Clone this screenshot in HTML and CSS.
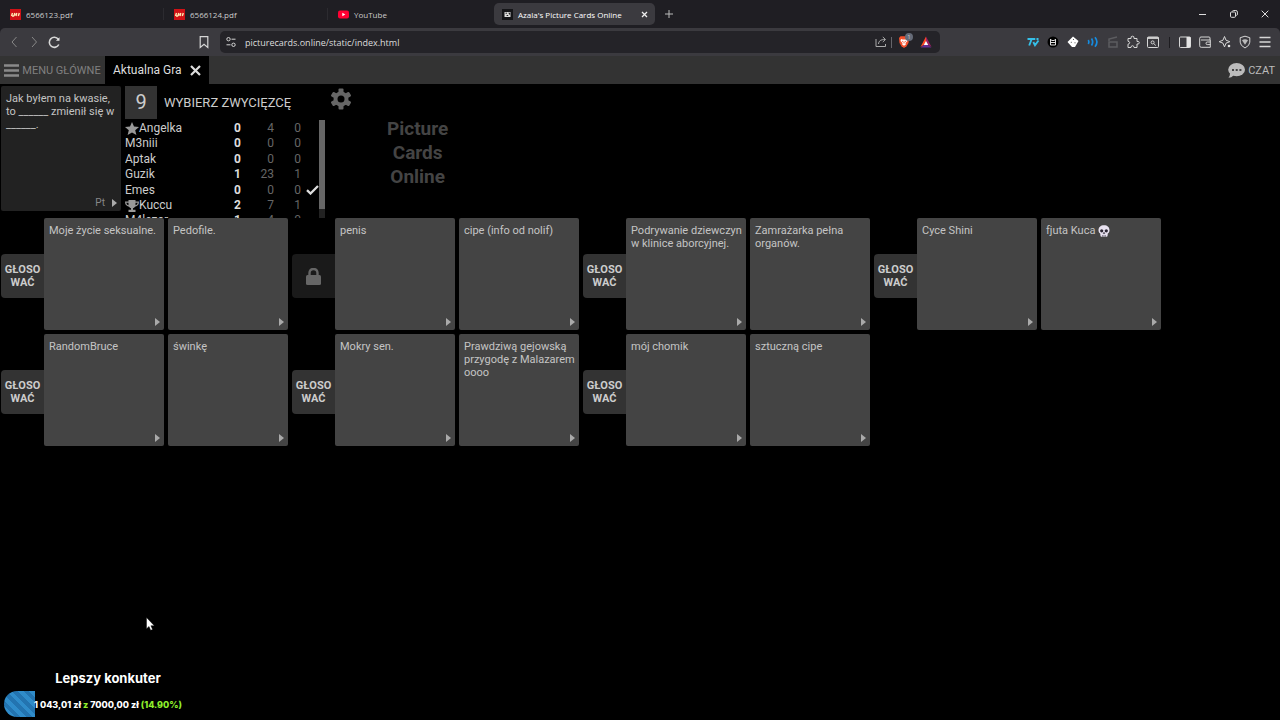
FILE: index.html
```html
<!DOCTYPE html>
<html lang="pl">
<head>
  <meta charset="UTF-8">
  <meta name="viewport" content="width=device-width, initial-scale=1.0">
  <title>Azala's Picture Cards Online</title>
  <link rel="stylesheet" href="styles.css">
</head>
<body>
  <header class="browser">
    <nav class="tabs">
      <a class="tab" href="#"><svg class="favicon" viewBox="0 0 11 11"><rect width="11" height="11" fill="#d01216"/><path d="M1.500 7l1-3M4 7l.8-3M6 7l.8-3M8.300 7l1-3M2 7h2M4.500 5.500h1" stroke="#ffe9b0" stroke-width="1.400"/></svg>6566123.pdf</a>
      <a class="tab" href="#"><svg class="favicon" viewBox="0 0 11 11"><rect width="11" height="11" fill="#d01216"/><path d="M1.500 7l1-3M4 7l.8-3M6 7l.8-3M8.300 7l1-3M2 7h2M4.500 5.500h1" stroke="#ffe9b0" stroke-width="1.400"/></svg>6566124.pdf</a>
      <a class="tab tab-last" href="#"><svg class="favicon" viewBox="0 0 11 11"><rect y="1.500" width="11" height="8" rx="2" fill="#f03"/><path d="M4.300 3.700v3.600l3-1.800z" fill="#fff"/></svg>YouTube</a>
      <div class="tab-active">
        <a href="#"><svg class="favicon" viewBox="0 0 11 11"><rect width="11" height="11" fill="#151518"/><path d="M2.500 3h6v5h-6z" fill="#ddd"/><path d="M3.500 4.200h1.600M6.600 4h1v1.600M4.600 6.500h1.600" stroke="#222"/></svg>Azala's Picture Cards Online</a>
        <button class="tab-close" aria-label="Close tab"><svg width="7" height="7" viewBox="0 0 7 7"><path d="M1 1l5 5M6 1L1 6" stroke="#eee" stroke-width="1.300"/></svg></button>
      </div>
      <button class="new-tab" aria-label="New tab"><svg width="8" height="8" viewBox="0 0 8 8"><path d="M4 0v8M0 4h8" stroke="#bbb"/></svg></button>
      <div class="window-buttons">
        <button aria-label="Minimize"><svg width="8" height="8" viewBox="0 0 8 8"><path d="M0 4.500h7" stroke="#ddd"/></svg></button>
        <button aria-label="Restore"><svg width="8" height="8" viewBox="0 0 8 8"><rect x=".5" y="2" width="5" height="5.300" rx="1" fill="none" stroke="#ddd"/><path d="M2.300 1.500q.2-1 1.300-1h2.200q1.600 0 1.600 1.600v2q0 1.200-1 1.400" fill="none" stroke="#ddd"/></svg></button>
        <button aria-label="Close"><svg width="8" height="8" viewBox="0 0 8 8"><path d="M.7.7l6.600 6.600M7.300.7L.7 7.300" stroke="#ddd"/></svg></button>
      </div>
    </nav>

    <div class="toolbar">
      <div class="nav-buttons">
        <button aria-label="Back"><svg viewBox="0 0 14 14"><path d="M9.500 2L5 7l4.500 5" stroke="#888"/></svg></button>
        <button aria-label="Forward"><svg viewBox="0 0 14 14"><path d="M5 2l4.500 5L5 12" stroke="#888"/></svg></button>
        <button aria-label="Reload"><svg viewBox="0 0 14 14"><path d="M11.800 9.500A5 5 0 1 1 11.300 4.300" stroke-width="1.600"/><path d="M12.500 2.200v3.600H8.900z" fill="#e4e4e4" stroke="none"/></svg></button>
        <button class="bookmark" aria-label="Bookmark"><svg viewBox="0 0 14 14"><path d="M3.200 1.700h7.600v10.800L7 9.300l-3.800 3.200z" stroke-width="1.200"/></svg></button>
      </div>
      <div class="address">
        <svg viewBox="0 0 14 14"><circle cx="4.500" cy="4.200" r="1.700"/><path d="M7.500 4.200h4M2.500 9.800h4"/><circle cx="9.500" cy="9.800" r="1.700"/></svg>
        <input type="text" aria-label="Address" value="picturecards.online/static/index.html">
        <button aria-label="Share"><svg viewBox="0 0 14 14"><path d="M2 4v7.500h9.500V9M4.500 9c.3-3 2-4.500 6.500-4.500M8.800 2l2.700 2.500L8.800 7" stroke="#aaa"/></svg></button>
        <span class="divider"></span>
        <button class="shields" aria-label="Shields"><svg viewBox="0 0 14 14"><path d="M2 3l1.500-1.700h7L12 3l-.5 5-2 3.300L7 13l-2.500-1.700-2-3.300z" fill="#f4512c" stroke="none"/><path d="M4 4l1.500.5h3L10 4l.5 2-2 2 .3 1.500L7 10.700 5.200 9.500 5.500 8l-2-2z" fill="#fff" stroke="none"/><path d="M5 6.200l1.500.6M9 6.200l-1.500.6M7 7v1.500" stroke="#f4512c" stroke-width=".8"/></svg><span class="badge">1</span></button>
        <button aria-label="Rewards"><svg viewBox="0 0 14 14"><path d="M7 1.500L1.500 12 7 8.500z" fill="#ff4724" stroke="none"/><path d="M7 1.500L12.500 12 7 8.500z" fill="#9e1f63" stroke="none"/><path d="M1.500 12.500h11L7 8.500z" fill="#662d91" stroke="none"/><path d="M7 6l2.200 4H4.800z" fill="#fff" stroke="none"/></svg></button>
      </div>
      <div class="extensions">
        <button aria-label="7TV"><svg viewBox="0 0 14 14"><path d="M1.500 4h4.200L3.200 10.500M6.500 4h2.800M7.300 7l1.700 3.300L12.500 5.500M10.500 4h2" stroke="#35bfe8" stroke-width="1.900"/></svg></button>
        <button aria-label="Mask"><svg viewBox="0 0 14 14"><circle cx="7" cy="7" r="5.500" fill="#000" stroke="none"/><path d="M4.500 4v6h5V4M4.500 4.500l1.500 1h2l1.500-1M5 7.500h4" stroke="#ddd"/></svg></button>
        <button aria-label="Cube"><svg viewBox="0 0 14 14"><path d="M7 1.500L12.500 6 9 12H6L1.500 7z" fill="#fff" stroke="none"/><path d="M7 4.500h1M4.800 7.300h1M8.500 7.800h1" stroke="#555"/></svg></button>
        <button aria-label="Sound"><svg viewBox="0 0 14 14"><path d="M2.300 5q1.200 2 0 4M5.500 3.500q2.300 3.500 0 7M9 2.300q3.800 4.700 0 9.400" stroke="#168ce0" stroke-width="1.700"/></svg></button>
        <button aria-label="Clips"><svg viewBox="0 0 14 14"><path d="M3 7h8v5H3zM3 6V4l8-2" stroke="#5c5c60" stroke-width="1.500"/></svg></button>
        <button aria-label="Extensions"><svg viewBox="0 0 14 14"><path d="M2 3.500h3q-.5-2.300 1.500-2.300T8 3.500h3v3q2.300-.5 2.300 1.200T11 9v3.500H8q0-1.800-1.500-1.800T5 12.500H2V9.200q1.700-.3 1.700-1.500T2 6.300z"/></svg></button>
        <button aria-label="Search tabs"><svg viewBox="0 0 14 14"><rect x="1.500" y="2" width="11" height="10.500" rx="1"/><path d="M1.500 3h11" stroke-width="1.800"/><circle cx="6.600" cy="7.400" r="1.500"/><path d="M8 8.800l1.800 1.700"/></svg></button>
        <span class="divider dark"></span>
        <button aria-label="Sidebar"><svg viewBox="0 0 14 14"><rect x="1.500" y="2" width="11" height="10.500" rx="1"/><path d="M8.500 2h4v10.500h-4z" fill="#e4e4e4" stroke="none"/></svg></button>
        <button aria-label="Wallet"><svg viewBox="0 0 14 14"><path d="M12 5V3q0-1-1-1H3Q1.700 2 1.700 3.300v7.500q0 1.500 1.500 1.500H12.300V5H3M12.500 7H9.200q-1.200 0-1.200 1.300t1.200 1.300h3.300"/></svg></button>
        <button aria-label="Leo"><svg viewBox="0 0 14 14"><path d="M6.500 1.500L8 5.200l3.800 1.500L8 8.200l-1.500 3.700L5 8.200 1.200 6.700 5 5.200z"/><circle cx="11" cy="11" r="1.300" fill="#e4e4e4" stroke="none"/></svg></button>
        <button aria-label="VPN"><svg viewBox="0 0 14 14"><path d="M7 1.200l4.800 1.500v4.500q0 3.300-4.800 5.800-4.800-2.500-4.800-5.800V2.700z"/><path d="M4 5.300q3-2 6 0L7 9.800z" fill="#bbb" stroke="none"/></svg></button>
        <button aria-label="Menu"><svg viewBox="0 0 14 14"><path d="M1.500 2.500h11M1.500 7h11M1.500 11.500h11" stroke-width="1.400"/></svg></button>
      </div>
    </div>
  </header>

  <nav class="app-bar">
    <button class="menu-button"><svg width="15" height="13" viewBox="0 0 15 13"><path d="M0 1.500h15M0 6.500h15M0 11.500h15" stroke="#8a8a8a" stroke-width="2.400"/></svg>MENU GŁÓWNE</button>
    <div class="game-tab">
      <a href="#">Aktualna Gra</a>
      <button aria-label="Zamknij"><svg width="11" height="11" viewBox="0 0 11 11"><path d="M1 1l9 9M10 1l-9 9" stroke="#ddd" stroke-width="2.200"/></svg></button>
    </div>
    <button class="chat-button"><svg width="17" height="15" viewBox="0 0 17 15"><path d="M2.200 9.500Q2 13 .500 14.800q3 0 5-2.300z" fill="#bbb"/><ellipse cx="8.600" cy="6.700" rx="8.400" ry="6.600" fill="#bbb"/><path d="M4 6h2v2H4zM7.700 6h2v2h-2zM11.400 6h2v2h-2z" fill="#444"/></svg>CZAT</button>
  </nav>

  <main>
    <section class="game-header">
      <article class="card black-card">
        <p>Jak byłem na kwasie, to ______ zmienił się w ______.</p>
        <footer>Pt <button class="more" aria-label="Więcej"></button></footer>
      </article>
      <div class="panel">
        <div class="status">
          <span class="timer">9</span>
          <h1>WYBIERZ ZWYCIĘZCĘ</h1>
        </div>
        <div class="players">
          <table>
            <tr><td class="name"><svg width="14" height="13" viewBox="0 0 14 13"><path d="M7 0l2 4.500 5 .4-3.800 3.300 1.200 4.800L7 10.500 2.600 13l1.200-4.800L0 4.900l5-.4z" fill="#999"/></svg>Angelka</td><td class="score">0</td><td>4</td><td>0</td><td class="mark"></td></tr>
            <tr><td class="name">M3niii</td><td class="score">0</td><td>0</td><td>0</td><td class="mark"></td></tr>
            <tr><td class="name">Aptak</td><td class="score">0</td><td>0</td><td>0</td><td class="mark"></td></tr>
            <tr><td class="name">Guzik</td><td class="score">1</td><td>23</td><td>1</td><td class="mark"></td></tr>
            <tr><td class="name">Emes</td><td class="score">0</td><td>0</td><td>0</td><td class="mark"><svg width="13" height="10" viewBox="0 0 13 10"><path d="M1 5.200l3.500 3.300L12 1" fill="none" stroke="#ddd" stroke-width="2.300"/></svg></td></tr>
            <tr><td class="name"><svg width="14" height="12" viewBox="0 0 14 12"><path d="M3.500 0h7v1.500H14q0 4.500-4 5.200-.8 1.300-2 1.600v1.500h2.500V12h-7V9.800H6V8.300q-1.200-.3-2-1.600Q0 6 0 1.500h3.500zM1.300 2.700q.3 2 2.200 2.600V2.700zM12.700 2.700h-2.200v2.600q1.900-.6 2.200-2.600z" fill="#999" fill-rule="evenodd"/></svg>Kuccu</td><td class="score">2</td><td>7</td><td>1</td><td class="mark"></td></tr>
            <tr><td class="name">M4lezar</td><td class="score">1</td><td>4</td><td>0</td><td class="mark"></td></tr>
          </table>
          <div class="scroll-track"><div class="scroll-thumb"></div></div>
        </div>
      </div>
      <button class="settings" aria-label="Ustawienia"><svg width="20" height="22" viewBox="-10 -11 20 22"><g fill="#666"><circle r="7.500"/><rect x="-2.500" y="-10.500" width="5" height="21" rx="1"/><rect x="-2.500" y="-10.500" width="5" height="21" rx="1" transform="rotate(60)"/><rect x="-2.500" y="-10.500" width="5" height="21" rx="1" transform="rotate(120)"/></g><circle r="3.500" fill="#000"/></svg></button>
      <div class="logo">Picture<br>Cards<br>Online</div>
    </section>

    <section class="answers">
      <div class="answer">
        <button class="vote">GŁOSO<br>WAĆ</button>
        <article class="card"><p>Moje życie seksualne.</p><button class="more" aria-label="Więcej"></button></article>
        <article class="card"><p>Pedofile.</p><button class="more" aria-label="Więcej"></button></article>
      </div>
      <div class="answer">
        <button class="vote" disabled aria-label="Zablokowane"><svg width="15" height="17" viewBox="0 0 15 17"><path d="M3.500 8V5q0-4 4-4t4 4v3" fill="none" stroke="#666" stroke-width="2.400"/><rect y="7" width="15" height="10" rx="1.500" fill="#666"/></svg></button>
        <article class="card"><p>penis</p><button class="more" aria-label="Więcej"></button></article>
        <article class="card"><p>cipe (info od nolif)</p><button class="more" aria-label="Więcej"></button></article>
      </div>
      <div class="answer">
        <button class="vote">GŁOSO<br>WAĆ</button>
        <article class="card"><p>Podrywanie dziewczyn w klinice aborcyjnej.</p><button class="more" aria-label="Więcej"></button></article>
        <article class="card"><p>Zamrażarka pełna organów.</p><button class="more" aria-label="Więcej"></button></article>
      </div>
      <div class="answer">
        <button class="vote">GŁOSO<br>WAĆ</button>
        <article class="card"><p>Cyce Shini</p><button class="more" aria-label="Więcej"></button></article>
        <article class="card"><p>fjuta Kuca <svg class="emoji" role="img" aria-label="czaszka" viewBox="0 0 12 12"><path d="M6 .3c3.400 0 5.500 2 5.500 5 0 1.600-.6 2.600-1.700 3.200L9.500 11q-.1.800-.9.800H3.400q-.8 0-.9-.8L2.200 8.500C1.100 7.900.5 6.900.5 5.300c0-3 2.100-5 5.500-5z" fill="#e8e2f0"/><circle cx="3.700" cy="5.800" r="1.600" fill="#2b2633"/><circle cx="8.300" cy="5.800" r="1.600" fill="#2b2633"/><path d="M6 7.200l.8 1.400H5.200zM4.600 10v1.800M6 10v1.800M7.400 10v1.800" fill="#2b2633" stroke="#2b2633" stroke-width=".5"/></svg></p><button class="more" aria-label="Więcej"></button></article>
      </div>
      <div class="answer">
        <button class="vote">GŁOSO<br>WAĆ</button>
        <article class="card"><p>RandomBruce</p><button class="more" aria-label="Więcej"></button></article>
        <article class="card"><p>świnkę</p><button class="more" aria-label="Więcej"></button></article>
      </div>
      <div class="answer">
        <button class="vote">GŁOSO<br>WAĆ</button>
        <article class="card"><p>Mokry sen.</p><button class="more" aria-label="Więcej"></button></article>
        <article class="card"><p>Prawdziwą gejowską przygodę z Malazarem oooo</p><button class="more" aria-label="Więcej"></button></article>
      </div>
      <div class="answer">
        <button class="vote">GŁOSO<br>WAĆ</button>
        <article class="card"><p>mój chomik</p><button class="more" aria-label="Więcej"></button></article>
        <article class="card"><p>sztuczną cipe</p><button class="more" aria-label="Więcej"></button></article>
      </div>
    </section>
  </main>

  <!-- stream overlay: donation goal and mouse pointer -->
  <aside class="goal">
    <h2>Lepszy konkuter</h2>
    <div class="goal-bar">
      <div class="goal-fill" style="width: 14.9%"></div>
      <p>1 043,01 zł <span>z</span> 7000,00 zł <span>(14.90%)</span></p>
    </div>
  </aside>
  <svg class="pointer" width="9" height="14" viewBox="0 0 9 14"><path d="M.5.500v11.200l2.500-2.300 1.700 3.900 1.900-.8-1.700-3.800h3.400z" fill="#fff" stroke="#000" stroke-width=".4"/></svg>
</body>
</html>
```
FILE: styles.css
```css
* {
  box-sizing: border-box;
}

body {
  margin: 0;
  min-height: 100vh;
  background: #000;
  color: #ccc;
  font-family: Roboto, sans-serif;
  font-size: 11px;
}

button,
input {
  padding: 0;
  border: 0;
  background: none;
  color: inherit;
  font: inherit;
}

button {
  display: flex;
  align-items: center;
  justify-content: center;
}

a {
  color: inherit;
  text-decoration: none;
}

p, h1, h2 {
  margin: 0;
}

/* browser window */
.browser {
  font-family: "Open Sans", sans-serif;
  font-size: 8px;
  background: #1f1e23;
}

.tabs {
  display: flex;
  align-items: center;
  height: 28px;
}

.tab {
  display: flex;
  align-items: center;
  gap: 5px;
  width: 164px;
  height: 12px;
  padding-left: 10px;
  border-right: 1px solid #2c2b30;
}

.tab-last {
  border-right: 0;
}

.favicon {
  width: 11px;
  height: 11px;
}

.tab-active {
  display: flex;
  align-items: center;
  justify-content: space-between;
  width: 161px;
  height: 22px;
  margin-left: 2px;
  padding: 0 7px 0 8px;
  border-radius: 5px;
  background: #3b3a3f;
  color: #fff;
}

.tab-active a {
  display: flex;
  align-items: center;
  gap: 5px;
}

.new-tab {
  width: 28px;
  height: 22px;
}

.window-buttons {
  display: flex;
  margin-left: auto;
}

.window-buttons button {
  width: 31px;
  height: 28px;
}

.toolbar {
  display: grid;
  grid-template-columns: 220px 1fr 340px;
  align-items: center;
  height: 28px;
  border-radius: 5px 5px 0 0;
  background: #3b3a3f;
}

.toolbar svg {
  width: 14px;
  height: 14px;
  fill: none;
  stroke: #d6d6d6;
}

.toolbar button {
  width: 20px;
  height: 22px;
}

.nav-buttons {
  display: flex;
  padding: 0 6px 0 4px;
}

.nav-buttons .bookmark {
  margin-left: auto;
}

.address {
  display: flex;
  align-items: center;
  height: 22px;
  padding: 0 4px;
  border-radius: 5px;
  background: #242328;
}

.address input {
  flex: 1;
  margin-left: 7px;
  color: #ddd;
  font-size: 9px;
}

.divider {
  width: 1px;
  height: 11px;
  margin-right: 2px;
  background: #66656a;
}

.divider.dark {
  margin: 0 5px 0 6px;
  background: #1d1c20;
}

.shields {
  position: relative;
  margin-right: 2px;
}

.badge {
  position: absolute;
  top: 2px;
  right: 1px;
  width: 8px;
  height: 8px;
  border-radius: 4px;
  background: #656b78;
  font-size: 6px;
  line-height: 8px;
}

.extensions {
  display: flex;
  align-items: center;
  justify-content: flex-end;
  padding-right: 5px;
}

/* game menu bar */
.app-bar {
  display: flex;
  height: 28px;
  background: #333;
}

.menu-button {
  gap: 3px;
  width: 105px;
  color: #808080;
}

.game-tab {
  display: flex;
  align-items: center;
  gap: 8px;
  padding: 0 8px;
  background: #000;
  color: #ddd;
  font-size: 12px;
}

.chat-button {
  gap: 3px;
  margin-left: auto;
  padding-right: 5px;
  color: #bbb;
}

/* round status */
.game-header {
  display: flex;
  gap: 4px;
  height: 134px;
  padding: 2px 1px 0;
}

.card {
  display: flex;
  flex-direction: column;
  justify-content: space-between;
  width: 120px;
  height: 112px;
  padding: 6px 4px 4px 5px;
  border-radius: 2px;
  background: #444;
  color: #c4c4c4;
  line-height: 13px;
}

.black-card {
  height: 125px;
  background: #222;
}

.black-card footer {
  display: flex;
  align-items: center;
  justify-content: flex-end;
  gap: 7px;
  color: #888;
  font-size: 10px;
  line-height: 8px;
}

.more {
  align-self: flex-end;
  width: 5px;
  height: 8px;
  background: #aaa;
  clip-path: polygon(0 0, 100% 50%, 0 100%);
}

.panel {
  display: flex;
  flex-direction: column;
  gap: 1px;
  width: 200px;
}

.status {
  display: flex;
  align-items: center;
  gap: 7px;
}

.timer {
  width: 32px;
  height: 33px;
  background: #333;
  font-size: 20px;
  line-height: 33px;
  text-align: center;
}

.status h1 {
  font-size: 13px;
  font-weight: 400;
  white-space: nowrap;
}

.players {
  display: flex;
  align-items: flex-start;
  flex: 1;
  min-height: 0;
  overflow: hidden;
}

.players table {
  flex: 1;
  height: 108px;
  border-spacing: 0;
  table-layout: fixed;
  font-size: 12px;
  line-height: 14px;
}

.players td {
  width: 27px;
  padding: 0;
  color: #666;
  text-align: right;
}

.players .name {
  width: auto;
  color: #ccc;
  text-align: left;
}

.players .score {
  color: #ddd;
  font-weight: 700;
}

.players td.score {
  width: 20px;
}

.players td:nth-child(3) {
  width: 33px;
}

.players .mark {
  width: 18px;
}

.players svg {
  vertical-align: middle;
}

.scroll-track {
  width: 6px;
  height: 100%;
  background: #222;
}

.scroll-thumb {
  height: 91%;
  background: #666;
}

.settings {
  width: 24px;
  height: 25px;
}

.logo {
  margin: 31px 0 0 30px;
  color: #444;
  font-size: 19px;
  font-weight: 700;
  line-height: 24px;
  text-align: center;
}

/* played cards */
.answers {
  display: flex;
  flex-wrap: wrap;
  gap: 4px;
  padding: 0 1px;
}

.answer {
  display: flex;
  gap: 4px;
}

.vote {
  width: 43px;
  height: 44px;
  margin: 36px -4px 0 0;
  border-radius: 4px 0 0 4px;
  background: #333;
  color: #ccc;
  font-size: 11px;
  font-weight: 700;
  line-height: 13px;
}

.vote:disabled {
  background: #1a1a1a;
}

.emoji {
  width: 12px;
  height: 12px;
  vertical-align: middle;
}

/* donation goal */
.goal {
  position: absolute;
  bottom: 3px;
  left: 4px;
  width: 208px;
  color: #fff;
  font-family: Inter, sans-serif;
  text-align: center;
}

.goal h2 {
  font-size: 13px;
  line-height: 25px;
}

.goal-bar {
  display: grid;
  align-items: center;
  height: 26px;
  border-radius: 13px;
  overflow: hidden;
}

.goal-fill,
.goal-bar p {
  grid-area: 1 / 1;
}

.goal-fill {
  height: 26px;
  background: repeating-linear-gradient(45deg, #2374b0 0 4px, #2f8cca 4px 8px);
}

.goal-bar p {
  font-size: 9px;
  font-weight: 800;
}

.goal-bar span {
  color: #8fee2c;
}

.pointer {
  position: absolute;
  top: 617px;
  left: 146px;
}
```
